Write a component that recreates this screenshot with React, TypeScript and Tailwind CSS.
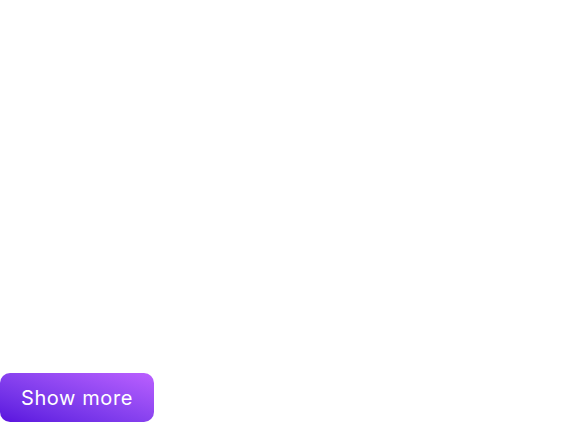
export default function App() {
  return (
    <div className="flex h-[423px] w-full flex-col justify-end bg-white">
      <div className="pb-px">
        <button className="flex h-[49px] w-[154px] items-center justify-center rounded-[10px] bg-gradient-to-tr from-[#5a10de] to-[#bb5fff] pt-px text-[20px] font-normal tracking-[0.03em] text-white [font-family:Inter,'Noto_Sans',sans-serif]">
          Show more
        </button>
      </div>
    </div>
  );
}
